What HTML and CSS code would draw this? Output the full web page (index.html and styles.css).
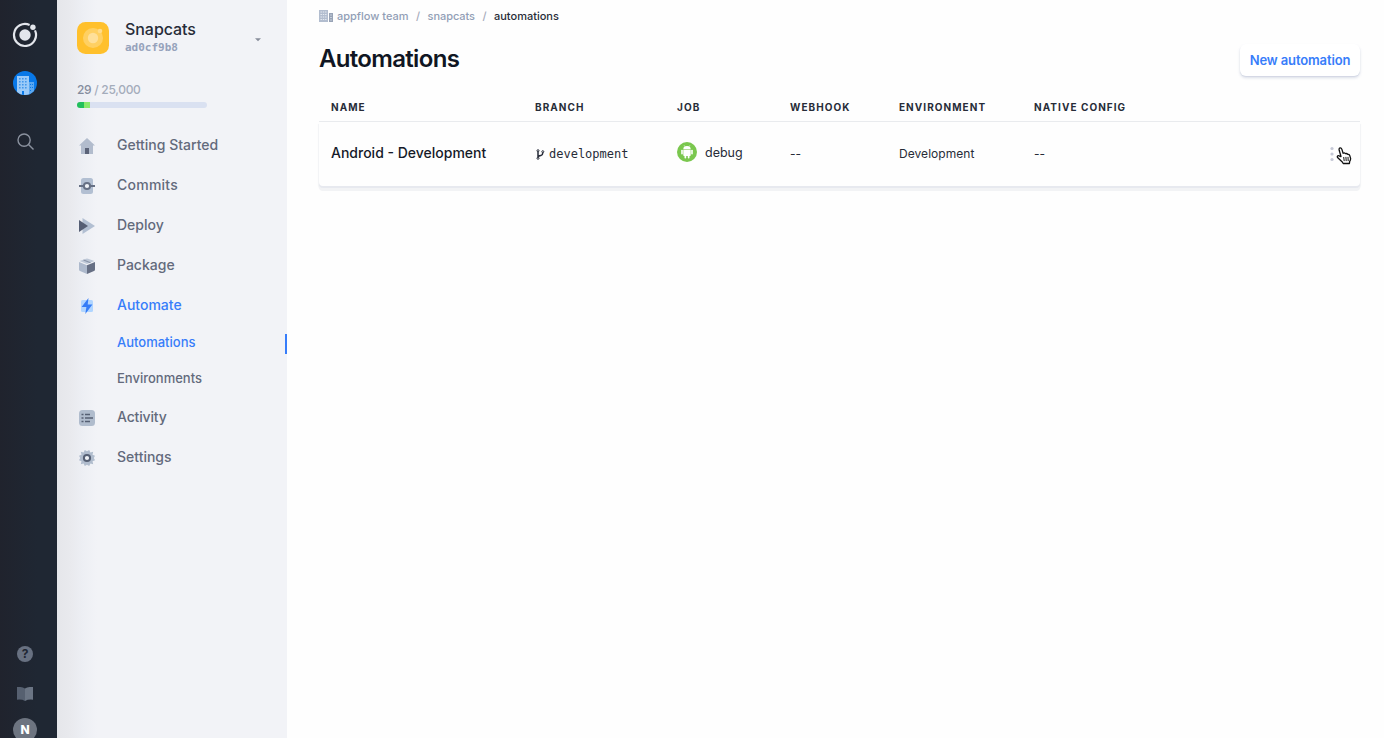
FILE: index.html
```html
<!DOCTYPE html>
<html lang="en">
<head>
<meta charset="utf-8">
<title>Automations</title>
<link rel="stylesheet" href="styles.css">
</head>
<body>
<div class="app">
  <nav class="rail">
    <svg class="rail-logo" width="26" height="26" viewBox="0 0 26 26"><path d="M17.600 3A11 11 0 1 0 23 8.400" fill="none" stroke="#e3e6ec" stroke-width="2.200"/><circle cx="13" cy="13" r="5.700" fill="#e3e6ec"/><circle cx="20.900" cy="5.300" r="2.700" fill="#e3e6ec"/></svg>
    <svg class="rail-org" width="24" height="24" viewBox="0 0 24 24"><defs><clipPath id="disc"><circle cx="12" cy="12" r="12"/></clipPath></defs><g clip-path="url(#disc)"><path fill="#0878e8" d="M0 0h24v24H0z"/><path fill="#9bcaf8" d="M4 5h12v19H4z"/><path fill="#5aa7f0" d="M16 11h5v13h-5z"/><path fill="#4196ec" d="M6 7h1.600v1.600H6zm3 0h1.600v1.600H9zm3 0h1.600v1.600H12zM6 10h1.600v1.600H6zm3 0h1.600v1.600H9zm3 0h1.600v1.600H12zM6 13h1.600v1.600H6zm3 0h1.600v1.600H9zm3 0h1.600v1.600H12zM6 16h1.600v1.600H6zm3 0h1.600v1.600H9zm3 0h1.600v1.600H12z"/><path fill="#0878e8" d="M9 20h2v4H9zM17 13h1v1h-1zm2 0h1v1h-1zm-2 3h1v1h-1zm2 0h1v1h-1zm-2 3h1v1h-1z"/></g></svg>
    <svg class="rail-search" width="18" height="18" viewBox="0 0 18 18" fill="none" stroke="#8a919e" stroke-width="1.400"><circle cx="7.100" cy="7.100" r="6.100"/><path d="M11.500 11.500l5 5"/></svg>
    <div class="rail-bottom">
      <div class="help">?</div>
      <svg class="book" width="16" height="14" viewBox="0 0 16 14"><path d="M0 0q5-.4 8 1.400V14Q5 12.200 0 12.700z" fill="#566070"/><path d="M16 0q-5-.4-8 1.400V14q3-1.800 8-1.300z" fill="#6b7584"/></svg>
      <div class="avatar">N</div>
    </div>
  </nav>
  <aside class="sidebar">
    <div class="app-head">
      <svg width="32" height="32" viewBox="0 0 32 32"><rect width="32" height="32" rx="8.500" fill="#ffc02c"/><circle cx="16" cy="16" r="10" fill="#ffd062"/><circle cx="16" cy="16" r="5.200" fill="#ffe09a"/><circle cx="23" cy="9" r="2.300" fill="#ffdb8a"/></svg>
      <div class="app-id"><div class="app-name">Snapcats</div><div class="app-hash">ad0cf9b8</div></div>
      <svg class="caret" width="6" height="4" viewBox="0 0 6 4"><path d="M0 .3h6L3 3.300z" fill="#888e9b"/></svg>
    </div>
    <div class="usage"><b>29</b> / 25,000</div>
    <div class="meter"><span class="meter-a"></span><span class="meter-b"></span></div>
    <ul class="menu">
      <li><svg viewBox="0 0 16 16"><path d="M8 0l8 7.600h-2V16H2V7.600H0z" fill="#b2bccd"/><path d="M6 10h4v6H6z" fill="#5b6378"/></svg><span>Getting Started</span></li>
      <li class="commits"><svg viewBox="0 0 16 16"><rect x="2" width="12" height="16" rx="2.500" fill="#b2bfd2"/><path d="M0 8h5m6 0h5" stroke="#667084" stroke-width="2"/><circle cx="8" cy="8" r="3.100" fill="#f0f3f8" stroke="#667084" stroke-width="2"/></svg><span>Commits</span></li>
      <li><svg viewBox="0 0 16 16"><path d="M3.500 0L16 8 3.500 16z" fill="#b2bfd2"/><path d="M0 2l9 6-9 6z" fill="#555e74"/></svg><span>Deploy</span></li>
      <li><svg viewBox="0 0 16 16"><path d="M0 4l8 3.200V16l-7-3q-1-.4-1-1.500z" fill="#adb9cc"/><path d="M16 4L8 7.200V16l7-3q1-.4 1-1.500z" fill="#666f84"/><path d="M.6 3L7 .7q1-.4 2 0L15.400 3 8 6z" fill="#bec8d7"/><path d="M4.500 2l7 2.700" stroke="#8994a8" stroke-width="1.200"/></svg><span>Package</span></li>
      <li class="on"><svg viewBox="0 0 16 16"><rect x="2" y="2" width="12" height="12" rx="1.500" fill="#b0d5ff"/><path d="M9.500 0L2.600 9h4.800L6.300 16 13.400 6.600H8.700z" fill="#347cf7"/></svg><span>Automate</span></li>
      <li class="sub on current"><span>Automations</span></li>
      <li class="sub"><span>Environments</span></li>
      <li class="activity"><svg viewBox="0 0 16 16"><rect width="16" height="16" rx="3.500" fill="#b0bccd"/><path d="M2.500 4.500h2m1.500 0h5M2.500 8h2M6 8h8M2.500 11.500h2m1.500 0h5" stroke="#555f73" stroke-width="1.600"/></svg><span>Activity</span></li>
      <li><svg viewBox="0 0 16 16"><path d="M8 1.200L10.200 0l1.200 2.500 2.800-.7-.7 2.900L16 5.800 14.800 8 16 10.200l-2.500 1.100.7 2.900-2.800-.7L10.200 16 8 14.800 5.800 16l-1.200-2.500-2.800.7.700-2.900L0 10.200 1.200 8 0 5.800l2.500-1.100-.7-2.900 2.800.7L5.800 0z" fill="#b0bccd"/><circle cx="8" cy="8" r="3.100" fill="#eef1f6" stroke="#555f73" stroke-width="2"/></svg><span>Settings</span></li>
    </ul>
  </aside>
  <main class="main">
    <div class="crumbs">
      <svg width="14" height="12" viewBox="0 0 14 12"><path d="M0 0h9v12H0z" fill="#b2bdcf"/><path d="M10 3h4v9h-4z" fill="#98a3b6"/><path d="M1.500 2h6M1.500 4.500h6M1.500 7h6M1.500 9.500h6" stroke="#e6ebf2" stroke-width="1" stroke-dasharray="1.400 .9"/><path d="M11 5h2m-2 2.500h2M11 10h2" stroke="#c6cfdb"/></svg>
      <span class="c-team">appflow team</span><span class="slash">/</span><span class="c-app">snapcats</span><span class="slash">/</span><span class="c-here">automations</span>
    </div>
    <header class="title-row"><h1>Automations</h1><button class="new">New automation</button></header>
    <div class="grid thead"><span>NAME</span><span>BRANCH</span><span>JOB</span><span>WEBHOOK</span><span>ENVIRONMENT</span><span>NATIVE CONFIG</span></div>
    <div class="grid row">
      <span class="r-name">Android - Development</span>
      <span class="r-branch"><svg width="9" height="11" viewBox="0 0 9 11" fill="none" stroke="#262b38"><circle cx="2" cy="1.700" r="1"/><circle cx="2" cy="9.300" r="1"/><circle cx="6.800" cy="2.700" r="1"/><path d="M2 2.700v5.600M6.800 3.700q0 2.300-2 2.900Q2 7 2 8.300" stroke-width="1.500"/></svg>development</span>
      <span class="r-job"><svg width="20" height="20" viewBox="0 0 20 20"><circle cx="10" cy="10" r="10" fill="#7ac74e"/><g fill="#fff"><path d="M6.300 7.200a3.700 3.200 0 0 1 7.400 0z"/><path d="M6.300 7.800h7.400v5.500q0 .7-.7.700H7q-.7 0-.7-.7z"/><rect x="4.200" y="7.800" width="1.600" height="4.800" rx=".8"/><rect x="14.200" y="7.800" width="1.600" height="4.800" rx=".8"/><rect x="7.500" y="12" width="1.700" height="4.500" rx=".8"/><rect x="10.800" y="12" width="1.700" height="4.500" rx=".8"/></g><path d="M7 3.200l1 1.500m5-1.500l-1 1.500" stroke="#fff" stroke-width=".5"/></svg>debug</span>
      <span class="dash">--</span><span class="r-env">Development</span><span class="dash">--</span>
      <span class="more"><svg width="4" height="16" viewBox="0 0 4 16" fill="#c5c8d6"><circle cx="2" cy="2.500" r="1.600"/><circle cx="2" cy="8" r="1.600"/><circle cx="2" cy="13.500" r="1.600"/></svg></span>
      <svg class="cursor" width="16" height="18" viewBox="0 0 16 18"><path d="M5 9.500L3.200 3.300Q2.700 1.300 4 .9q1.400-.2 1.900 1.500l1.200 3.900q1.300-1 2.400.4 1.200-.7 2.300.7 1.400-.3 1.900 1l.9 3q.1 1.500-.9 3l-.3 2.100H7.200l-.9-1.500-4.500-4.200q-1-1.200-.1-1.900 1-.7 2.200.4z" fill="#fff" stroke="#111" stroke-width="1.300" stroke-linejoin="round"/><path d="M7.700 10l.5 4.100M9.900 9.900l.3 4.200m1.800-4.200l.2 4.200" stroke="#111"/></svg>
    </div>
  </main>
</div>
</body>
</html>
```
FILE: styles.css
```css
* { box-sizing: border-box; }
body { margin: 0; font-family: Inter, "Liberation Sans", sans-serif; background: #fefefe; color: #272c38; }
svg { display: block; flex: none; }
.app { display: flex; height: 738px; overflow: hidden; }
.rail { width: 57px; flex: none; background: linear-gradient(90deg, #20232d, #1f2733 65%); display: flex; flex-direction: column; align-items: flex-start; padding: 22px 0 0 12px; }
.rail-org { margin: 23px 0 0 1px; }
.rail-search { margin: 38px 0 0 5px; }
.rail-bottom { margin-top: auto; height: 92px; display: flex; flex-direction: column; align-items: center; width: 26px; }
.help { width: 16px; height: 16px; flex: none; border-radius: 50%; background: #687181; color: #1f2632; font-size: 12px; font-weight: 700; line-height: 16px; text-align: center; }
.book { margin-top: 25px; }
.avatar { margin-top: 17px; width: 24px; height: 24px; flex: none; border-radius: 50%; background: #6d7480; color: #fff; font-size: 12px; font-weight: 800; line-height: 24px; text-align: center; }
.sidebar { width: 230px; flex: none; padding: 20px 0 0 20px; background: linear-gradient(90deg, #e5e6ea 0, #e9eaee 14px, #edeff4 26px, #f2f3f7 40px); }
.app-head { display: flex; align-items: center; height: 36px; }
.app-id { margin-left: 16px; width: 130px; }
.app-name { margin-top: -1px; font-size: 16px; font-weight: 500; line-height: 20px; letter-spacing: -.05px; }
.app-hash { margin-top: 1px; font: 700 11px/16px "DejaVu Sans Mono", monospace; color: #96a2bb; }
.caret { margin-top: 4px; }
.usage { margin-top: 26px; font-size: 12px; line-height: 16px; font-weight: 500; letter-spacing: -.3px; color: #a4acbb; }
.usage b { font-weight: 500; color: #858d9e; }
.meter { display: flex; margin-top: 4px; width: 130px; height: 6px; border-radius: 3px; overflow: hidden; background: #dae1f1; }
.meter-a { width: 7px; background: #21bf5b; }
.meter-b { width: 6px; background: #88e96b; }
.menu { list-style: none; margin: 17px 0 0; padding: 0; color: #636a7c; font-size: 14px; font-weight: 500; }
.menu li { height: 40px; display: flex; align-items: center; padding-left: 2px; padding-bottom: 2px; }
.menu svg { width: 16px; height: 16px; margin: 4px 22px 0 0; }
.menu .commits { letter-spacing: .25px; }
.menu .activity { letter-spacing: -.15px; }
.menu .sub { height: 36px; padding-left: 40px; font-size: 13px; }
.menu .on { color: #377dfa; }
.menu .current { border-right: 2px solid #377dfa; height: 20px; margin: 9px 0 7px; padding-bottom: 5px; }
.main { flex: 1; padding: 8px 24px 0 32px; }
.crumbs { display: flex; align-items: center; height: 16px; font-size: 11px; font-weight: 500; color: #929eb6; }
.crumbs svg { margin-right: 4px; }
.slash { width: 19px; text-align: center; color: #a5aaba; }
.c-app { letter-spacing: -.05px; }
.c-here { color: #272c38; }
.title-row { display: flex; justify-content: space-between; height: 60px; padding-top: 20px; }
h1 { margin: 0; font-size: 24px; line-height: 30px; font-weight: 600; letter-spacing: -.68px; color: #101623; }
.new { width: 120px; height: 32px; border: 0; border-radius: 6px; background: #fff; box-shadow: 0 2px 3px #cbd0dfaa, 0 1px 1px #dfe2eb; font: 600 13px/30px Inter, sans-serif; letter-spacing: -.12px; color: #377dfa; padding: 0 0 1px; white-space: nowrap; }
.grid { display: grid; grid-template-columns: 204px 142px 113px 109px 135px 296px auto; padding-left: 12px; align-items: center; }
.thead { height: 38px; padding-top: 8px; border-bottom: 1px solid #e9ebee; font-size: 10px; font-weight: 700; letter-spacing: 1.05px; }
.row { position: relative; height: 64px; background: #fefefe; border-radius: 0 0 4px 4px; box-shadow: 0 2px 0 #e7e9ef, 0 5px 0 #f2f3f5, 0 3px 1px 1px #f2f3f5; font-size: 12px; }
.r-name { font-size: 14px; font-weight: 500; color: #151a28; padding-bottom: 4px; }
.r-branch { display: flex; align-items: center; gap: 4px; padding-left: 1px; font: 12px "DejaVu Sans Mono", monospace; }
.r-job { display: flex; align-items: center; gap: 8px; padding-bottom: 4px; font-size: 12.500px; }
.dash, .r-env { padding-bottom: 2px; letter-spacing: .05px; }
.cursor { position: absolute; left: 1017px; top: 25px; }
```
